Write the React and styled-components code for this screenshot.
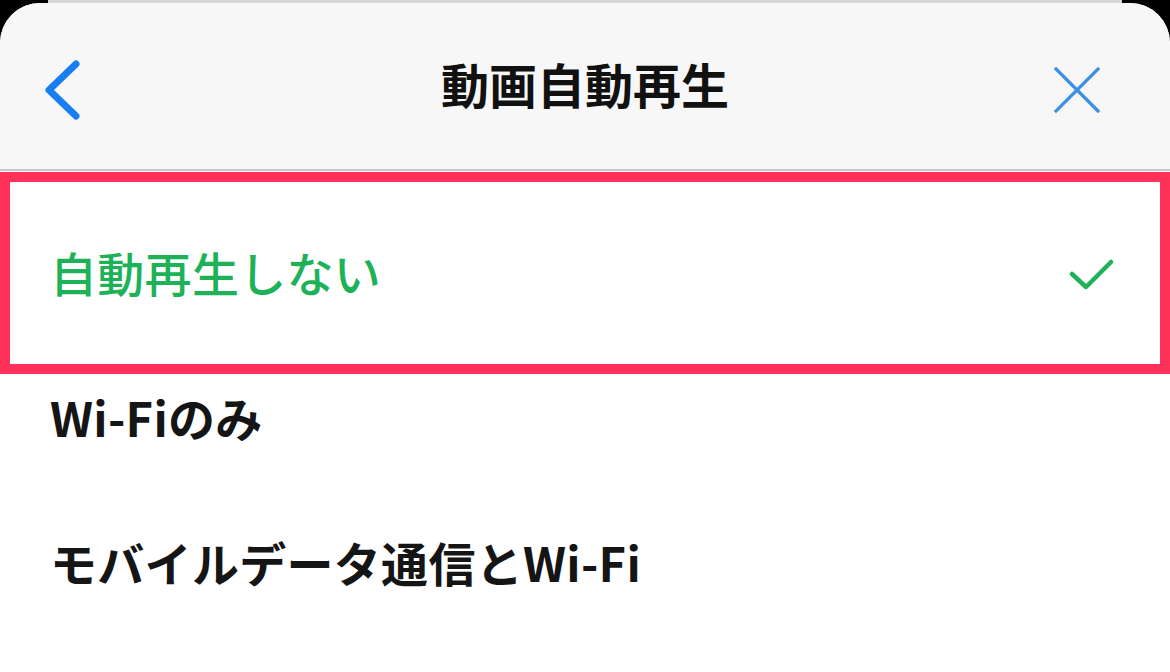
import styled, { createGlobalStyle } from 'styled-components';

const GlobalStyle = createGlobalStyle`
  html, body {
    margin: 0;
    padding: 0;
    background: #000;
  }
  body {
    font-family: "Noto Sans CJK JP", "Noto Sans", sans-serif;
  }
`;

const Screen = styled.div`
  width: 1170px;
  height: 672px;
  overflow: hidden;
  background: #000;
  display: flex;
  flex-direction: column;
`;

const BehindSheet = styled.div`
  height: 3px;
  margin: 0 48px;
  background: #d6d6d6;
  flex-shrink: 0;
`;

const Sheet = styled.div`
  flex: 1;
  background: #fff;
  border-radius: 40px 40px 0 0;
  overflow: hidden;
  display: flex;
  flex-direction: column;
`;

const Header = styled.header`
  height: 166px;
  background: #f7f7f7;
  border-bottom: 2px solid #c9c9c9;
  display: grid;
  grid-template-columns: 120px 1fr 120px;
  align-items: center;
  flex-shrink: 0;
`;

const Title = styled.h1`
  margin: 0;
  text-align: center;
  font-size: 48px;
  font-weight: 700;
  color: #111;
  line-height: 1;
  padding-bottom: 6px;
`;

const IconButton = styled.button`
  border: none;
  background: none;
  padding: 0;
  display: flex;
  align-items: center;
  justify-content: ${p => (p.$end ? 'flex-end' : 'flex-start')};
  padding-left: ${p => (p.$end ? '0' : '44px')};
  padding-right: ${p => (p.$end ? '70px' : '0')};
  padding-top: 8px;
`;

const List = styled.ul`
  list-style: none;
  margin: 0;
  padding: 30px 0 0;
`;

const Row = styled.li`
  position: relative;
  height: 145px;
  display: flex;
  align-items: center;
  justify-content: space-between;
  padding: 0 56px 0 50px;
  font-size: 47px;
  font-weight: ${p => (p.$selected ? 500 : 700)};
  color: ${p => (p.$selected ? '#1db258' : '#151515')};
  letter-spacing: 0.3px;

  ${p =>
    p.$selected &&
    `
    &::before {
      content: '';
      position: absolute;
      left: 0;
      right: 0;
      top: -29px;
      bottom: -28px;
      border: 10px solid #ff3159;
      pointer-events: none;
    }
  `}
`;

const Label = styled.span`
  line-height: 1;
  padding-bottom: 4px;
`;

const BackIcon = () => (
  <svg width="40" height="60" viewBox="0 0 40 60">
    <polyline
      points="32,4 5,30 32,56"
      fill="none"
      stroke="#1a7ef3"
      strokeWidth="7"
      strokeLinecap="round"
      strokeLinejoin="round"
    />
  </svg>
);

const CloseIcon = () => (
  <svg width="46" height="46" viewBox="0 0 46 46">
    <path d="M2 2 L44 44 M44 2 L2 44" stroke="#3a8fe6" strokeWidth="3.2" strokeLinecap="square" />
  </svg>
);

const CheckIcon = () => (
  <svg width="46" height="34" viewBox="0 0 46 34">
    <polyline
      points="4,17 18,30 43,5"
      fill="none"
      stroke="#1fb25a"
      strokeWidth="4.5"
      strokeLinecap="round"
      strokeLinejoin="round"
    />
  </svg>
);

const options = [
  { key: 'off', label: '自動再生しない' },
  { key: 'wifi', label: 'Wi-Fiのみ' },
  { key: 'all', label: 'モバイルデータ通信とWi-Fi' },
];

export default function App() {
  const selected = 'off';
  return (
    <>
      <GlobalStyle />
      <Screen>
        <BehindSheet />
        <Sheet>
          <Header>
            <IconButton aria-label="戻る">
              <BackIcon />
            </IconButton>
            <Title>動画自動再生</Title>
            <IconButton $end aria-label="閉じる">
              <CloseIcon />
            </IconButton>
          </Header>
          <List>
            {options.map(o => (
              <Row key={o.key} $selected={o.key === selected}>
                <Label>{o.label}</Label>
                {o.key === selected && <CheckIcon />}
              </Row>
            ))}
          </List>
        </Sheet>
      </Screen>
    </>
  );
}
